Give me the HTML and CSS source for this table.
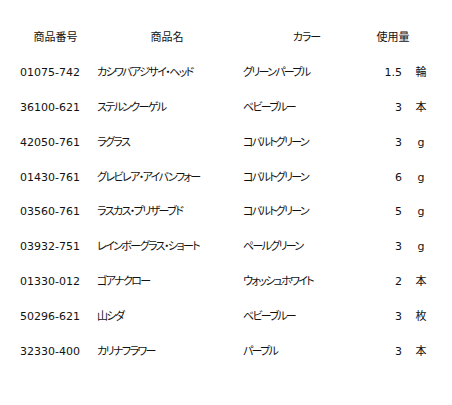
FILE: index.html
```html
<!DOCTYPE html>
<html lang="ja">
<head>
<meta charset="utf-8">
<link rel="stylesheet" href="styles.css">
</head>
<body>
<div class="sheet">
  <div class="th c-code">商品番号</div>
  <div class="th c-name">商品名</div>
  <div class="th c-color">カラー</div>
  <div class="th c-qty">使用量</div>
  <div class="th c-unit"></div>

  <div class="td c-code">01075-742</div><div class="td c-name">カシワバアジサイ・ヘッド</div><div class="td c-color">グリーンパープル</div><div class="td c-qty">1.5</div><div class="td c-unit">輪</div>
  <div class="td c-code">36100-621</div><div class="td c-name">ステルンクーゲル</div><div class="td c-color">ベビーブルー</div><div class="td c-qty">3</div><div class="td c-unit">本</div>
  <div class="td c-code">42050-761</div><div class="td c-name">ラグラス</div><div class="td c-color">コバルトグリーン</div><div class="td c-qty">3</div><div class="td c-unit">g</div>
  <div class="td c-code">01430-761</div><div class="td c-name">グレビレア・アイバンフォー</div><div class="td c-color">コバルトグリーン</div><div class="td c-qty">6</div><div class="td c-unit">g</div>
  <div class="td c-code">03560-761</div><div class="td c-name">ラスカス・プリザーブド</div><div class="td c-color">コバルトグリーン</div><div class="td c-qty">5</div><div class="td c-unit">g</div>
  <div class="td c-code">03932-751</div><div class="td c-name">レインボーグラス・ショート</div><div class="td c-color">ペールグリーン</div><div class="td c-qty">3</div><div class="td c-unit">g</div>
  <div class="td c-code">01330-012</div><div class="td c-name">ゴアナクロー</div><div class="td c-color">ウォッシュホワイト</div><div class="td c-qty">2</div><div class="td c-unit">本</div>
  <div class="td c-code">50296-621</div><div class="td c-name">山シダ</div><div class="td c-color">ベビーブルー</div><div class="td c-qty">3</div><div class="td c-unit">枚</div>
  <div class="td c-code">32330-400</div><div class="td c-name">カリナフラワー</div><div class="td c-color">パープル</div><div class="td c-qty">3</div><div class="td c-unit">本</div>
</div>
</body>
</html>
```
FILE: styles.css
```css
html, body {
  margin: 0;
  padding: 0;
  background: #fff;
}
body {
  font-family: "DejaVu Sans", "Noto Sans CJK JP", sans-serif;
  font-size: 11px;
  color: #111;
}
.sheet {
  display: grid;
  grid-template-columns: 83px 140px 139px 34px 22px;
  grid-auto-rows: 34.9px;
  align-items: center;
  padding: 20px 0 0 14px;
  font-feature-settings: "palt";
}
.th, .td {
  white-space: nowrap;
  line-height: 1;
}
.th {
  text-align: center;
}
.th.c-color { letter-spacing: -1px; }
.td.c-code { padding-left: 6px; }
.td.c-name { padding-left: 0; letter-spacing: -1.6px; }
.td.c-color { padding-left: 6px; letter-spacing: -1.7px; }
.td.c-qty { text-align: right; padding-right: 8px; }
.td.c-unit { text-align: center; }
```
